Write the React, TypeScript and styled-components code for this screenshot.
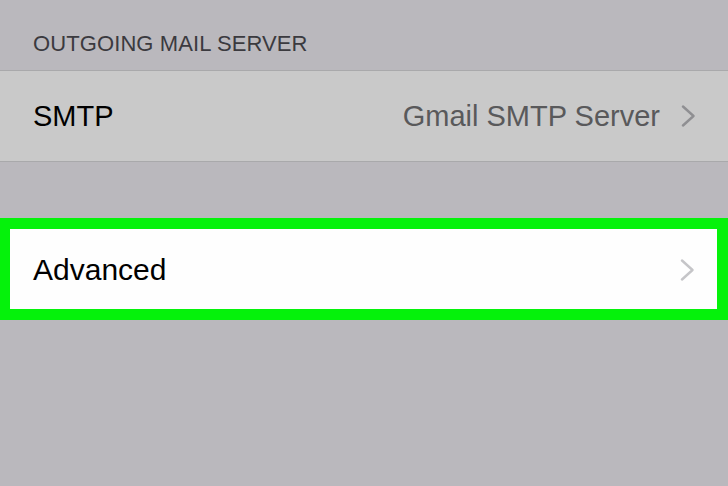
import React from "react";
import styled, { createGlobalStyle } from "styled-components";

const GlobalStyle = createGlobalStyle`
  html, body {
    margin: 0;
    padding: 0;
    background: #bab8bd;
  }
  body {
    font-family: "Liberation Sans", Arial, sans-serif;
  }
`;

const Page = styled.div`
  width: 728px;
  height: 486px;
  background: #bab8bd;
  overflow: hidden;
`;

const SectionHeader = styled.div`
  height: 70px;
  box-sizing: border-box;
  display: flex;
  align-items: flex-end;
  padding: 0 0 13px 33px;
  font-size: 22px;
  color: #3b3a3f;
  letter-spacing: 0.1px;
`;

const Group = styled.div`
  background: #c9c9c9;
  border-top: 1px solid #a9a9ab;
  border-bottom: 1px solid #a9a9ab;
`;

const Row = styled.div<{ $padRight: number }>`
  height: 90px;
  display: flex;
  align-items: center;
  padding: 0 ${(p) => p.$padRight}px 0 33px;
`;

const Label = styled.span<{ $size: number }>`
  flex: 1;
  font-size: ${(p) => p.$size}px;
  color: #000;
`;

const Detail = styled.span`
  font-size: 29px;
  color: #59595b;
  margin-right: 21px;
`;

const Spacer = styled.div`
  height: 56px;
`;

const Highlight = styled.div`
  border: 11px solid #05f20b;
  border-left-width: 10px;
  background: #fefefe;
`;

const InnerRow = styled.div`
  height: 80px;
  display: flex;
  align-items: center;
  padding: 2px 22px 0 23px;
  box-sizing: border-box;
`;

function Chevron({ color }: { color: string }) {
  return (
    <svg width="15" height="22" viewBox="0 0 15 22">
      <polyline
        points="2,1.5 12.5,11 2,20.5"
        fill="none"
        stroke={color}
        strokeWidth="2.4"
        strokeLinecap="round"
        strokeLinejoin="round"
      />
    </svg>
  );
}

export default function App() {
  return (
    <Page>
      <GlobalStyle />
      <SectionHeader>OUTGOING MAIL SERVER</SectionHeader>
      <Group>
        <Row $padRight={32}>
          <Label $size={29}>SMTP</Label>
          <Detail>Gmail SMTP Server</Detail>
          <Chevron color="#8f8f92" />
        </Row>
      </Group>
      <Spacer />
      <Highlight>
        <InnerRow>
          <Label $size={30}>Advanced</Label>
          <Chevron color="#c5c5c8" />
        </InnerRow>
      </Highlight>
    </Page>
  );
}
